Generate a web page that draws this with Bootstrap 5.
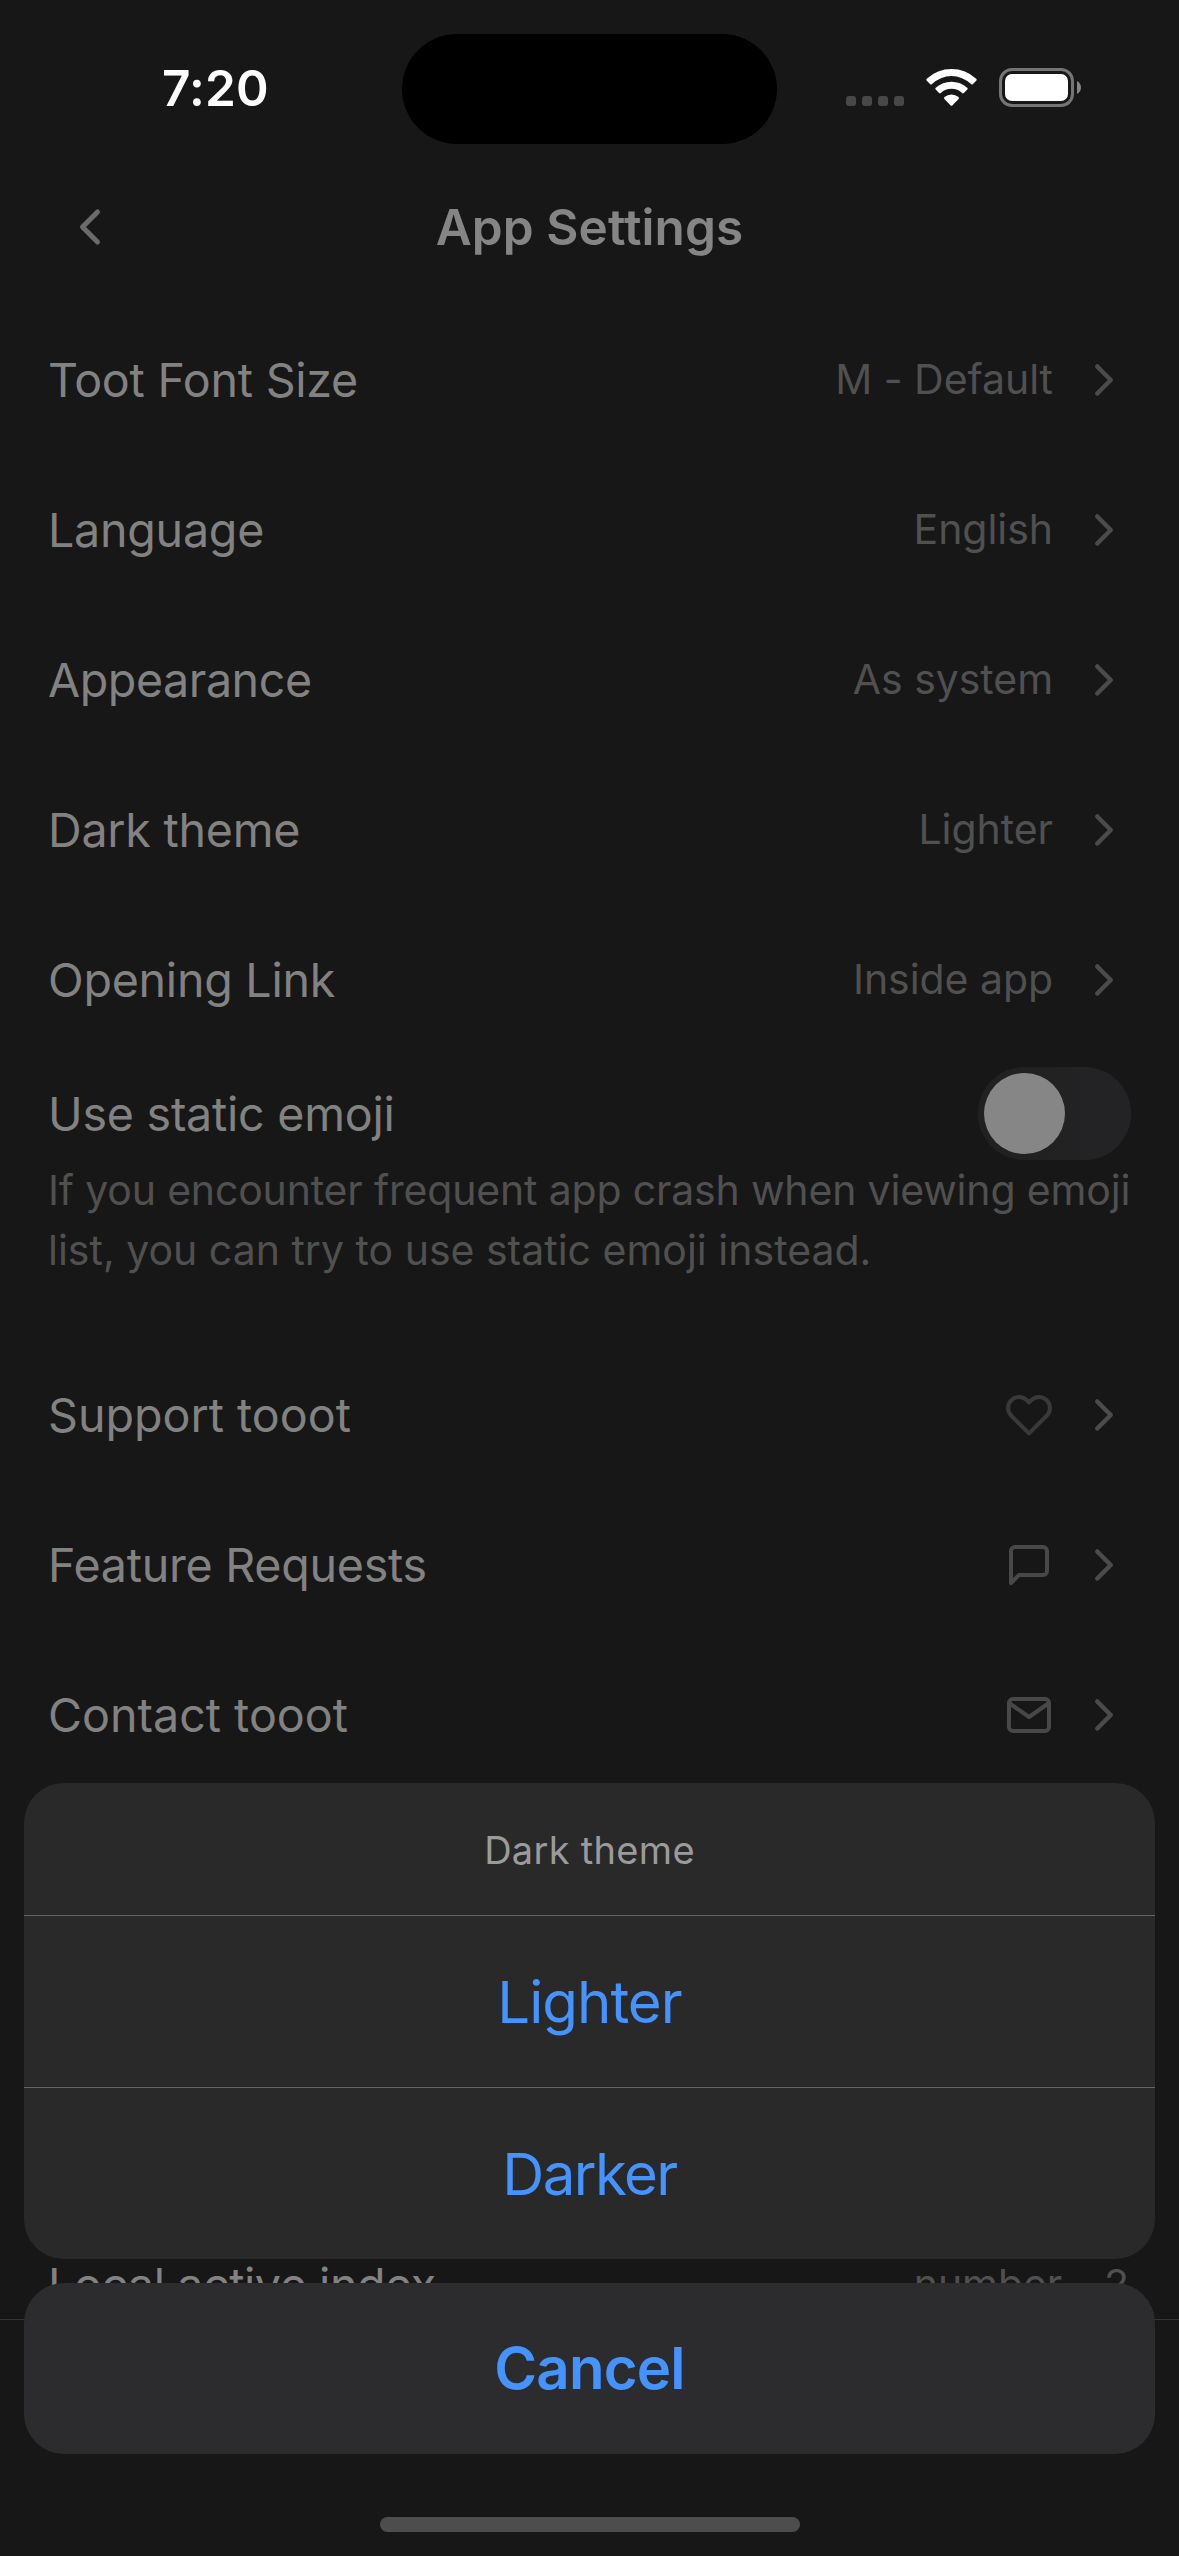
<!DOCTYPE html>
<html lang="en">
<head>
<meta charset="utf-8">
<meta name="viewport" content="width=device-width, initial-scale=1">
<title>App Settings</title>
<link href="https://cdn.jsdelivr.net/npm/bootstrap@5.3.0/dist/css/bootstrap.min.css" rel="stylesheet">
<style>
  body { background: #171717; font-family: Inter, "Liberation Sans", sans-serif; color: #828282; }
  .screen { width: 1179px; height: 2556px; background: #171717; }
  svg { display: block; flex: none; }
  .feather { fill: none; stroke: currentColor; stroke-width: 2; stroke-linecap: round; stroke-linejoin: round; }

  .status-bar { height: 177px; padding: 34px 98px 0 162px; }
  .status-half { height: 110px; width: 240px; }
  .clock { font-size: 49.5px; font-weight: 600; line-height: 108px; letter-spacing: .15px; color: #fff; }
  .island { width: 375px; height: 110px; background: #000; }
  .status-icons { width: 304px; padding-bottom: 3px; gap: 22px; }
  .cell-dots { gap: 6px; margin-top: 27px; }
  .cell-dots span { width: 10px; height: 10px; border-radius: 3px; background: #484848; }

  .title-bar { height: 100px; padding: 0 60px; margin-bottom: 28px; }
  .title-bar .back { color: #6b6b6b; width: 60px; }
  .title-bar h1 { font-size: 49.5px; font-weight: 600; letter-spacing: .1px; line-height: 60px; color: #858585; }

  .setting { height: 150px; padding: 0 48px; }
  .setting-name { font-size: 46.6px; letter-spacing: -.25px; line-height: 60px; white-space: nowrap; }
  .snug { letter-spacing: -.44px; }
  .roomy { letter-spacing: 0; }
  .setting-value { font-size: 41px; letter-spacing: -.05px; line-height: 58px; padding: 0 1px 2px 0; color: #505050; white-space: nowrap; }
  .chevron { color: #4b4b4b; margin-left: 24px; }
  .setting-value + .chevron { margin-left: 23px; }
  .glyph { color: #484848; }
  .glyph.dim { color: #393939; }

  .emoji-block { padding: 12px 48px 60px; }
  .emoji-row { height: 93px; }
  .toggle { width: 153px; height: 93px; padding: 6px; background: linear-gradient(90deg, #212121 45%, #232325 70%); }
  .toggle span { display: block; width: 81px; height: 81px; background: #868686; }
  .hint { font-size: 41px; line-height: 60px; color: #505050; white-space: nowrap; }
  .hint .line-a { letter-spacing: -.17px; }

  .last-setting { height: 109px; margin-top: 420px; padding: 45px 49px 0 48px; }
  .tab-bar { border-top: 1px solid #343434; flex: 1; background: #171717; z-index: 1; }

  .sheet { left: 24px; right: 24px; bottom: 102px; gap: 24px; z-index: 2; }
  .sheet-group { border-radius: 40px; background: #292929; }
  .sheet-title { height: 132px; padding-top: 2px; font-size: 38px; letter-spacing: .3px; color: #9b9b9b; }
  .sheet-action { height: 172px; padding-top: 2px; border-top: 1px solid #646464; font-size: 58.2px; color: #4493ff; letter-spacing: -1px; }
  .sheet-action.narrow { letter-spacing: -1.6px; }
  .sheet-cancel { height: 171px; border-radius: 40px; background: #2c2c2e; font-size: 58.2px; font-weight: 600; letter-spacing: -.85px; color: #4493ff; }
  .home-bar { left: 380px; bottom: 24px; width: 420px; height: 15px; background: #4d4d4d; z-index: 2; }
</style>
</head>
<body>
<svg class="d-none">
  <symbol id="right" viewBox="0 0 24 24"><path d="M9 18l6-6-6-6"/></symbol>
</svg>
<main class="screen position-relative overflow-hidden d-flex flex-column">

  <header class="status-bar d-flex align-items-start flex-shrink-0">
    <div class="status-half clock">7:20</div>
    <div class="island rounded-pill"></div>
    <div class="status-icons d-flex align-items-center justify-content-end status-half">
      <div class="cell-dots d-flex"><span></span><span></span><span></span><span></span></div>
      <svg width="51" height="38" viewBox="0 0 51 38" fill="#fff">
        <path d="M25.500 0A36.500 36.500 0 0 1 50.200 9.700Q51.200 10.700 50.200 11.700L47 14.900Q46 15.900 45 14.900A28.300 28.300 0 0 0 6 14.900Q5 15.900 4 14.900L.8 11.700Q-.2 10.700 .8 9.700A36.500 36.500 0 0 1 25.500 0Z"/>
        <path d="M25.500 12.700A23.500 23.500 0 0 1 41.300 18.800Q42.200 19.700 41.300 20.600L37.900 24Q37 24.900 36.100 24A15.600 15.600 0 0 0 14.900 24Q14 24.900 13.100 24L9.700 20.600Q8.800 19.700 9.700 18.800A23.500 23.500 0 0 1 25.500 12.700Z"/>
        <path d="M25.500 25.600A11 11 0 0 1 32.500 28.100Q33.500 29 32.600 29.900L26.300 36.400Q25.500 37.200 24.700 36.400L18.400 29.900Q17.500 29 18.500 28.100A11 11 0 0 1 25.500 25.600Z"/>
      </svg>
      <svg width="82" height="39" viewBox="0 0 82 39">
        <rect x="1.500" y="1.500" width="72" height="36" rx="11.500" fill="none" stroke="#757575" stroke-width="3"/>
        <rect x="6" y="6" width="63" height="27" rx="7" fill="#fff"/>
        <path d="M78 13Q82 15.500 82 19.500T78 26Z" fill="#868686"/>
      </svg>
    </div>
  </header>

  <nav class="title-bar d-flex align-items-center justify-content-between flex-shrink-0">
    <div class="back"><svg class="feather" width="60" height="60" viewBox="0 0 24 24"><path d="M15 18l-6-6 6-6"/></svg></div>
    <h1 class="m-0">App Settings</h1>
    <div class="back"></div>
  </nav>

  <section class="flex-shrink-0">
    <div class="setting d-flex align-items-center">
      <div class="setting-name me-auto">Toot Font Size</div><div class="setting-value">M - Default</div>
      <svg class="feather chevron" width="54" height="54"><use href="#right"/></svg>
    </div>
    <div class="setting d-flex align-items-center">
      <div class="setting-name me-auto">Language</div><div class="setting-value">English</div>
      <svg class="feather chevron" width="54" height="54"><use href="#right"/></svg>
    </div>
    <div class="setting d-flex align-items-center">
      <div class="setting-name snug me-auto">Appearance</div><div class="setting-value">As system</div>
      <svg class="feather chevron" width="54" height="54"><use href="#right"/></svg>
    </div>
    <div class="setting d-flex align-items-center">
      <div class="setting-name me-auto">Dark theme</div><div class="setting-value">Lighter</div>
      <svg class="feather chevron" width="54" height="54"><use href="#right"/></svg>
    </div>
    <div class="setting d-flex align-items-center">
      <div class="setting-name me-auto">Opening Link</div><div class="setting-value">Inside app</div>
      <svg class="feather chevron" width="54" height="54"><use href="#right"/></svg>
    </div>
    <div class="emoji-block">
      <div class="emoji-row d-flex align-items-center justify-content-between">
        <div class="setting-name">Use static emoji</div>
        <div class="toggle rounded-pill"><span class="rounded-circle"></span></div>
      </div>
      <p class="hint m-0"><span class="line-a">If you encounter frequent app crash when viewing emoji</span><br>list, you can try to use static emoji instead.</p>
    </div>
  </section>

  <section class="flex-shrink-0">
    <div class="setting d-flex align-items-center">
      <div class="setting-name roomy me-auto">Support tooot</div>
      <svg class="feather glyph dim" width="48" height="48" viewBox="0 0 24 24"><path d="M20.840 4.610a5.500 5.500 0 0 0-7.780 0L12 5.670l-1.060-1.060a5.500 5.500 0 0 0-7.780 7.780l1.060 1.060L12 21.230l7.780-7.780 1.060-1.060a5.500 5.500 0 0 0 0-7.780z"/></svg>
      <svg class="feather chevron" width="54" height="54"><use href="#right"/></svg>
    </div>
    <div class="setting d-flex align-items-center">
      <div class="setting-name me-auto">Feature Requests</div>
      <svg class="feather glyph" width="48" height="48" viewBox="0 0 24 24"><path d="M21 15a2 2 0 0 1-2 2H7l-4 4V5a2 2 0 0 1 2-2h14a2 2 0 0 1 2 2z"/></svg>
      <svg class="feather chevron" width="54" height="54"><use href="#right"/></svg>
    </div>
    <div class="setting d-flex align-items-center">
      <div class="setting-name roomy me-auto">Contact tooot</div>
      <svg class="feather glyph" width="48" height="48" viewBox="0 0 24 24"><path d="M4 4h16c1.100 0 2 .9 2 2v12c0 1.100-.9 2-2 2H4c-1.100 0-2-.9-2-2V6c0-1.100.9-2 2-2z"/><path d="M22 6l-10 7L2 6"/></svg>
      <svg class="feather chevron" width="54" height="54"><use href="#right"/></svg>
    </div>
    <div class="last-setting d-flex justify-content-between align-items-start">
      <div class="setting-name snug">Local active index</div><div class="setting-value">number - 2</div>
    </div>
  </section>

  <footer class="tab-bar"></footer>

  <div class="sheet position-absolute d-flex flex-column">
    <div class="sheet-group overflow-hidden">
      <div class="sheet-title d-flex align-items-center justify-content-center">Dark theme</div>
      <div class="sheet-action d-flex align-items-center justify-content-center">Lighter</div>
      <div class="sheet-action narrow d-flex align-items-center justify-content-center">Darker</div>
    </div>
    <div class="sheet-cancel d-flex align-items-center justify-content-center">Cancel</div>
  </div>
  <div class="home-bar position-absolute rounded-pill"></div>
</main>
<script src="https://cdn.jsdelivr.net/npm/bootstrap@5.3.0/dist/js/bootstrap.bundle.min.js"></script>
</body>
</html>
